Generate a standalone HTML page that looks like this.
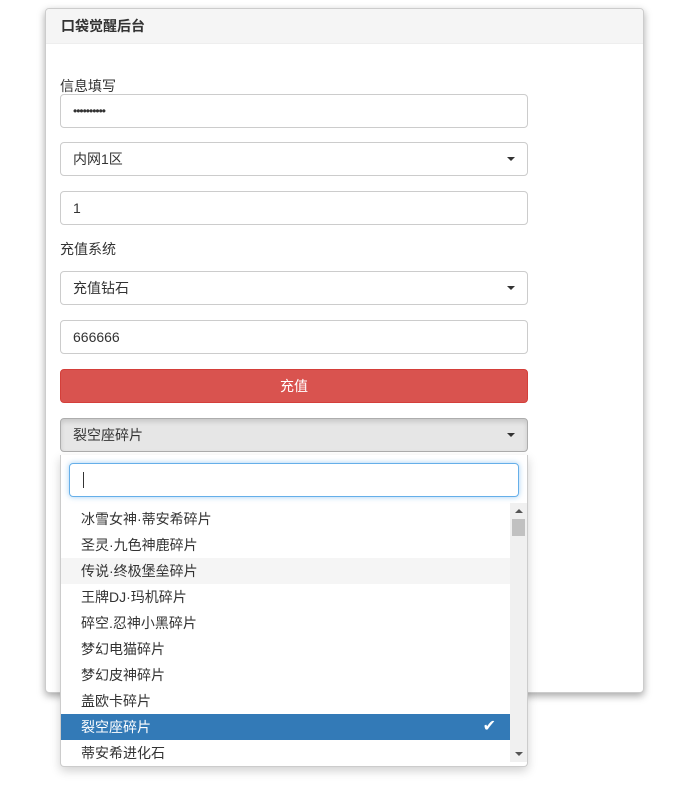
<!DOCTYPE html>
<html><head><meta charset="utf-8"><style>
body{margin:0;width:692px;height:788px;background:#fff;font-family:"Liberation Sans","Noto Sans CJK SC",sans-serif;font-size:14px;color:#333;position:relative;overflow:hidden}
.panel{position:absolute;left:45px;top:8px;width:597px;height:683px;border:1px solid #ccc;border-radius:4px;box-shadow:0 3px 8px rgba(0,0,0,.35);background:#fff}
.hd{height:34px;background:#f5f5f5;border-bottom:1px solid #eee;font-weight:bold;line-height:34px;padding-left:15px;border-radius:4px 4px 0 0}
.a{position:absolute;left:60px;height:32px;border:1px solid #ccc;border-radius:4px;background:#fff;line-height:32px;padding-left:12px;box-sizing:content-box;width:454px}
.caret{position:absolute;right:12px;top:14px;width:0;height:0;border-left:4px solid transparent;border-right:4px solid transparent;border-top:4px solid #333}
.lbl{position:absolute;left:60px}
.dd{position:absolute;left:60px;top:455px;width:466px;height:311px;border:1px solid #ccc;border-top:none;border-radius:0 0 4px 4px;background:#fff;box-shadow:0 4px 10px rgba(0,0,0,.18)}
.srch{position:absolute;left:8px;top:8px;width:448px;height:32px;border:1px solid #66afe9;border-radius:4px;box-shadow:0 0 6px rgba(102,175,233,.6)}
.srch i{position:absolute;left:13px;top:8px;width:1px;height:16px;background:#333}
.list{position:absolute;left:0;top:51px;width:449px}
.list div{height:26px;line-height:26px;padding-left:20px;color:#333}
.sb{position:absolute;left:449px;top:48px;width:17px;height:259px;background:#f0f0f0}
</style></head><body>
<div class="panel"><div class="hd">口袋觉醒后台</div></div>
<div class="lbl" style="top:76px">信息填写</div>
<div class="a" style="top:94px;letter-spacing:-1px;font-size:12px">••••••••••</div>
<div class="a" style="top:142px">内网1区<span class="caret"></span></div>
<div class="a" style="top:191px">1</div>
<div class="lbl" style="top:239px">充值系统</div>
<div class="a" style="top:271px">充值钻石<span class="caret"></span></div>
<div class="a" style="top:320px">666666</div>
<div class="a" style="top:369px;background:#d9534f;border-color:#d43f3a;color:#fff;text-align:center;padding-left:0;width:466px">充值</div>
<div class="a" style="top:418px;background:#e6e6e6;border-color:#adadad;box-shadow:inset 0 3px 5px rgba(0,0,0,.125)">裂空座碎片<span class="caret"></span></div>
<div class="dd">
<div class="srch"><i></i></div>
<div class="list">
<div>冰雪女神·蒂安希碎片</div>
<div>圣灵·九色神鹿碎片</div>
<div style="background:#f5f5f5">传说·终极堡垒碎片</div>
<div>王牌DJ·玛机碎片</div>
<div>碎空.忍神小黑碎片</div>
<div>梦幻电猫碎片</div>
<div>梦幻皮神碎片</div>
<div>盖欧卡碎片</div>
<div style="background:#337ab7;color:#fff;position:relative">裂空座碎片<span style="position:absolute;right:14px;top:0;font-size:16px">✔</span></div>
<div>蒂安希进化石</div>
</div>
<div class="sb"><div style="position:absolute;left:5px;top:6px;border-left:4px solid transparent;border-right:4px solid transparent;border-bottom:4px solid #555"></div><div style="position:absolute;left:2px;top:16px;width:13px;height:17px;background:#c1c1c1"></div><div style="position:absolute;left:5px;bottom:6px;border-left:4px solid transparent;border-right:4px solid transparent;border-top:4px solid #555"></div></div>
</div>
</body></html>
